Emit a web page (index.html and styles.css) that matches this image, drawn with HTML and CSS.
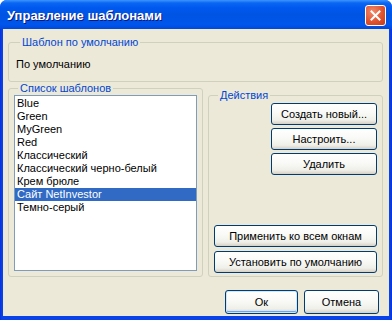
FILE: index.html
```html
<!DOCTYPE html>
<html lang="ru">
<head>
  <meta charset="UTF-8" />
  <title>Управление шаблонами</title>
  <link rel="stylesheet" href="styles.css">
</head>
<body>
  <div class="window">
    <div class="titlebar">
      <span class="title">Управление шаблонами</span>
      <button class="close" type="button" aria-label="Закрыть">
        <svg width="11" height="11" viewBox="0 0 11 11">
          <path d="M1.5 1.5 L9.5 9.5 M9.5 1.5 L1.5 9.5" stroke="#fff" stroke-width="2" stroke-linecap="square" />
        </svg>
      </button>
    </div>

    <div class="client">
      <fieldset class="group default-group">
        <legend>Шаблон по умолчанию</legend>
        <div class="default-name">По умолчанию</div>
      </fieldset>

      <div class="middle">
        <fieldset class="group list-group">
          <legend>Список шаблонов</legend>
          <ul class="listbox">
            <li>Blue</li>
            <li>Green</li>
            <li>MyGreen</li>
            <li>Red</li>
            <li>Классический</li>
            <li>Классический черно-белый</li>
            <li>Крем брюле</li>
            <li class="selected">Сайт NetInvestor</li>
            <li>Темно-серый</li>
          </ul>
        </fieldset>

        <fieldset class="group actions-group">
          <legend>Действия</legend>
          <div class="actions-top">
            <button class="btn btn-small" type="button">Создать новый...</button>
            <button class="btn btn-small" type="button">Настроить...</button>
            <button class="btn btn-small" type="button">Удалить</button>
          </div>
          <div class="actions-bottom">
            <button class="btn" type="button">Применить ко всем окнам</button>
            <button class="btn" type="button">Установить по умолчанию</button>
          </div>
        </fieldset>
      </div>

      <div class="footer">
        <button class="btn btn-ok" type="button">Ок</button>
        <button class="btn btn-cancel" type="button">Отмена</button>
      </div>
    </div>
  </div>
</body>
</html>
```

FILE: styles.css
```css
:root {
  --face: #ece9d8;
  --group-line: #d0d0bf;
  --legend: #0046d5;
  --select: #316ac5;
  --frame: #0831d9;
}
body {
  margin: 0;
  background: #fff;
  font-family: 'Liberation Sans', Arial, sans-serif;
  font-size: 11px;
  color: #000;
}
.window {
  width: 392px;
  height: 320px;
  box-sizing: border-box;
  display: flex;
  flex-direction: column;
  background: linear-gradient(to right, #0831d9, #0842e8 2px, #0842e8 calc(100% - 2px), #0831d9);
  border-radius: 7px 7px 0 0;
  overflow: hidden;
}
.titlebar {
  height: 29px;
  flex: none;
  display: flex;
  align-items: center;
  justify-content: space-between;
  padding: 0 6px 0 7px;
  background: linear-gradient(#3d95ff 0, #0a66f4 3px, #0058ee 8px, #0054e3 50%, #0055eb 85%, #0048dd 100%);
}
.title {
  color: #fff;
  font-weight: bold;
  font-size: 13px;
  text-shadow: 1px 1px #0a1883;
  margin-top: 1px;
}
.close {
  width: 21px;
  height: 21px;
  padding: 0;
  margin-top: 2px;
  border: 1px solid #fff;
  border-radius: 3px;
  background: radial-gradient(circle at 35% 30%, #f08b6c, #e0532f 55%, #c5391a);
  display: flex;
  align-items: center;
  justify-content: center;
}
.client {
  flex: 1;
  margin: 0 3px 4px;
  background: var(--face);
  padding: 7px 6px 0 5px;
  display: flex;
  flex-direction: column;
}
.group {
  margin: 0;
  border: 1px solid var(--group-line);
  border-radius: 3px;
  min-width: 0;
}
.group legend {
  color: var(--legend);
  padding: 0 2px;
  margin-left: 4px;
  line-height: 13px;
}
.default-group {
  height: 46px;
  box-sizing: border-box;
  padding: 9px 7px 0;
}
.default-name {
  line-height: 13px;
}
.middle {
  display: grid;
  grid-template-columns: 195px 1fr;
  column-gap: 5px;
  align-items: start;
}
.list-group {
  padding: 0 5px 5px;
}
.listbox {
  list-style: none;
  margin: 0;
  padding: 1px 0 0;
  height: 176px;
  box-sizing: border-box;
  border: 1px solid #7f9db9;
  background: #fff;
}
.listbox li {
  line-height: 13px;
  padding-left: 2px;
  white-space: nowrap;
}
.listbox li.selected {
  background: var(--select);
  color: #fff;
}
.actions-group {
  margin-top: 7px;
  height: 188px;
  box-sizing: border-box;
  padding: 1px 5px 3px;
  display: flex;
  flex-direction: column;
  justify-content: space-between;
}
.actions-top,
.actions-bottom {
  display: flex;
  flex-direction: column;
  align-items: flex-end;
  gap: 3px;
}
.actions-bottom {
  gap: 4px;
}
.btn {
  font-family: inherit;
  font-size: 11px;
  color: #000;
  height: 22px;
  padding: 0;
  border: 1px solid #003c74;
  border-radius: 3px;
  background: linear-gradient(#fff 0, #fafaf8 40%, #f0f0ea 80%, #d6d0c5 100%);
  box-sizing: border-box;
  width: 100%;
}
.btn-small {
  width: 106px;
}
.footer {
  display: flex;
  justify-content: flex-end;
  gap: 6px;
  padding: 13px 4px 0 0;
}
.btn-ok,
.btn-cancel {
  height: 24px;
}
.btn-ok {
  width: 73px;
  box-shadow: inset 0 0 0 1px #cee7ff, inset 0 -1px 0 1px #69a8f1;
}
.btn-cancel {
  width: 75px;
}
```
